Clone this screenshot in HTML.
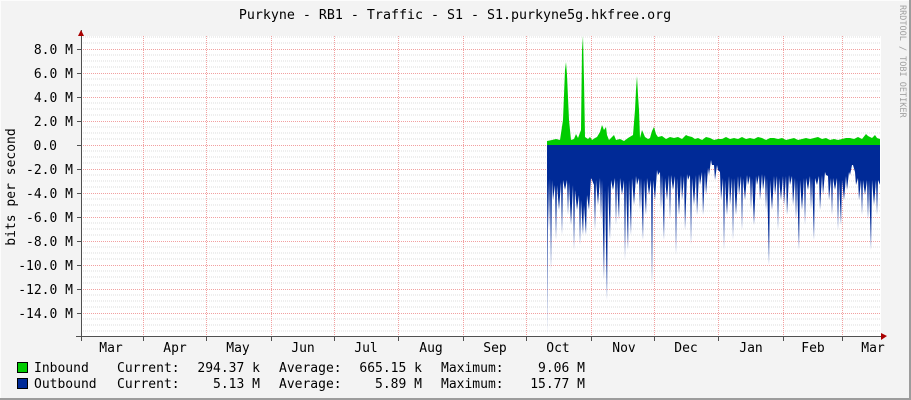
<!DOCTYPE html>
<html><head><meta charset="utf-8"><style>
html,body{margin:0;padding:0;background:#f3f3f3;}
svg{display:block;}
text{font-family:"DejaVu Sans Mono","Liberation Mono",monospace;fill:#000;}
</style></head><body>
<svg width="911" height="400" xmlns="http://www.w3.org/2000/svg">
<rect x="0" y="0" width="911" height="400" fill="#f3f3f3"/>
<rect x="0" y="0" width="911" height="1" fill="#fcfcfc"/>
<rect x="0" y="0" width="1" height="400" fill="#fcfcfc"/>
<rect x="909" y="0" width="2" height="400" fill="#9c9c9c"/>
<rect x="0" y="398" width="911" height="2" fill="#9c9c9c"/>
<text x="455" y="19" font-size="13.3" text-anchor="middle">Purkyne - RB1 - Traffic - S1 - S1.purkyne5g.hkfree.org</text>
<text transform="translate(900,5) rotate(90)" font-size="8.5" style="fill:#a0a0a0">RRDTOOL / TOBI OETIKER</text>
<rect x="81" y="36" width="800" height="300" fill="#fff"/>
<g stroke="#dcdcdc" stroke-dasharray="1,1">
<path d="M81 37H881M81 43H881M81 55H881M81 61H881M81 67H881M81 79H881M81 85H881M81 91H881M81 103H881M81 109H881M81 115H881M81 127H881M81 133H881M81 139H881M81 151H881M81 157H881M81 163H881M81 175H881M81 181H881M81 187H881M81 199H881M81 205H881M81 211H881M81 223H881M81 229H881M81 235H881M81 247H881M81 253H881M81 259H881M81 271H881M81 277H881M81 283H881M81 295H881M81 301H881M81 307H881M81 319H881M81 325H881M81 331H881"/>
</g>
<g stroke="#f2a0a0" stroke-dasharray="1,1">
<path d="M81 49.5H881M81 73.5H881M81 97.5H881M81 121.5H881M81 145.5H881M81 169.5H881M81 193.5H881M81 217.5H881M81 241.5H881M81 265.5H881M81 289.5H881M81 313.5H881"/>
<path d="M143.5 36V336M206.5 36V336M271.5 36V336M334.5 36V336M398.5 36V336M463.5 36V336M526.5 36V336M591.5 36V336M654.5 36V336M718.5 36V336M783.5 36V336M842.5 36V336"/>
</g>
<polygon fill="#002a97" points="547,145 547,336 548,180 549,230 550,178 551,270 552,180 553,200 555,185 556,240 557,185 559,210 561,182 562,235 563,180 565,190 567,180 568,215 569,182 571,225 573,185 574,250 575,190 577,210 579,195 580,245 581,200 583,235 584,205 586,235 587,195 589,210 591,178 592,180 594,185 595,230 596,180 598,205 600,178 601,220 602,180 604,280 605,190 607,300 608,185 610,240 611,180 613,190 615,178 616,225 617,180 619,220 620,178 622,195 624,180 625,260 626,182 628,250 629,180 631,235 632,178 634,205 636,176 637,185 639,178 640,210 641,178 643,240 644,180 646,215 647,178 649,195 651,180 652,285 653,180 655,200 657,170 658,175 660,172 661,210 662,175 664,240 665,178 667,200 669,175 670,220 671,175 673,190 675,176 676,255 677,178 679,215 681,175 682,200 684,176 685,230 687,174 688,180 690,175 691,245 692,178 694,205 696,175 697,215 699,174 700,185 702,172 703,215 705,172 706,195 708,168 709,175 711,160 712,165 714,165 715,180 717,165 718,170 720,172 721,200 723,178 724,250 725,180 727,215 729,176 730,205 732,178 733,240 734,178 736,215 738,176 739,195 741,176 742,230 743,178 745,200 747,175 748,185 750,176 751,210 752,178 754,225 756,176 757,185 759,175 760,200 762,174 763,190 765,175 766,210 767,178 769,265 770,180 772,210 774,176 775,195 777,176 778,230 779,178 781,200 783,176 784,205 786,176 787,215 789,175 790,185 792,176 793,205 795,178 796,220 797,180 799,250 800,180 802,210 804,178 805,225 806,178 808,190 810,176 811,210 812,178 814,240 815,178 817,185 819,176 820,210 822,175 823,195 825,172 826,175 828,176 829,200 831,178 832,215 833,178 835,190 837,178 838,230 839,180 841,225 842,180 844,200 846,176 847,190 849,172 850,175 852,165 853,165 855,172 856,185 858,178 859,200 861,180 862,215 863,180 865,195 867,180 868,220 869,180 871,250 872,180 874,205 876,180 877,215 878,180 880,185 880,145"/>
<polygon fill="#00cc00" points="547,145 547,141 552,140 556,139 560,140 563,120 565,70 566,62 567,75 569,120 571,140 574,139 576,134 578,138 581,130 582,50 583,36 584,80 585,137 588,139 590,137 592,140 595,138 597,137 600,132 602,125 604,130 606,127 607,135 609,140 612,137 614,135 616,140 620,139 624,141 628,138 633,135 635,110 636,90 637,76 638,95 639,110 640,138 642,130 645,137 648,139 650,138 652,131 654,127 656,134 658,137 662,136 666,139 670,137 674,138 678,137 682,139 686,135 688,136 692,137 695,139 698,138 702,140 706,137 710,138 714,140 718,139 722,139 726,137 730,139 734,138 738,139 742,137 746,139 750,138 754,139 758,137 762,138 766,140 770,138 774,138 778,139 782,138 786,140 790,139 794,138 798,140 802,139 806,138 810,139 814,138 818,137 822,139 826,138 830,140 834,139 838,140 842,139 846,138 850,138 854,139 858,137 862,139 866,134 868,136 872,138 875,135 877,138 880,139 880,145"/>
<path d="M81.5 30V341" stroke="#505050"/>
<path d="M76 336.5H885" stroke="#505050"/>
<polygon points="78,36 84,36 81,30" fill="#a00"/>
<polygon points="881,333 881,340 887,336" fill="#a00"/>
<g stroke="#505050">
<path d="M77 49.5H81M77 73.5H81M77 97.5H81M77 121.5H81M77 145.5H81M77 169.5H81M77 193.5H81M77 217.5H81M77 241.5H81M77 265.5H81M77 289.5H81M77 313.5H81"/>
<path d="M143.5 336V341M206.5 336V341M271.5 336V341M334.5 336V341M398.5 336V341M463.5 336V341M526.5 336V341M591.5 336V341M654.5 336V341M718.5 336V341M783.5 336V341M842.5 336V341"/>
</g>
<g font-size="13" text-anchor="end">
<text x="73" y="54">8.0 M</text><text x="73" y="78">6.0 M</text><text x="73" y="102">4.0 M</text><text x="73" y="126">2.0 M</text>
<text x="57" y="150">0.0</text>
<text x="73" y="174">-2.0 M</text><text x="73" y="198">-4.0 M</text><text x="73" y="222">-6.0 M</text><text x="73" y="246">-8.0 M</text>
<text x="73" y="270">-10.0 M</text><text x="73" y="294">-12.0 M</text><text x="73" y="318">-14.0 M</text>
</g>
<text transform="translate(15,187) rotate(-90)" font-size="13" text-anchor="middle">bits per second</text>
<g font-size="13" text-anchor="middle">
<text x="111" y="352">Mar</text><text x="175" y="352">Apr</text><text x="238" y="352">May</text><text x="303" y="352">Jun</text><text x="366" y="352">Jul</text><text x="431" y="352">Aug</text><text x="495" y="352">Sep</text><text x="558" y="352">Oct</text><text x="624" y="352">Nov</text><text x="686" y="352">Dec</text><text x="751" y="352">Jan</text><text x="813" y="352">Feb</text><text x="873" y="352">Mar</text>
</g>
<rect x="17.5" y="362.5" width="10" height="10" fill="#00cc00" stroke="#000"/>
<rect x="17.5" y="378.5" width="10" height="10" fill="#002a97" stroke="#000"/>
<g font-size="13">
<text x="34" y="372">Inbound</text><text x="117" y="372">Current:</text><text x="260" y="372" text-anchor="end">294.37 k</text><text x="279" y="372">Average:</text><text x="422" y="372" text-anchor="end">665.15 k</text><text x="441" y="372">Maximum:</text><text x="585" y="372" text-anchor="end">9.06 M</text>
<text x="34" y="388">Outbound</text><text x="117" y="388">Current:</text><text x="260" y="388" text-anchor="end">5.13 M</text><text x="279" y="388">Average:</text><text x="422" y="388" text-anchor="end">5.89 M</text><text x="441" y="388">Maximum:</text><text x="585" y="388" text-anchor="end">15.77 M</text>
</g>
</svg>
</body></html>
